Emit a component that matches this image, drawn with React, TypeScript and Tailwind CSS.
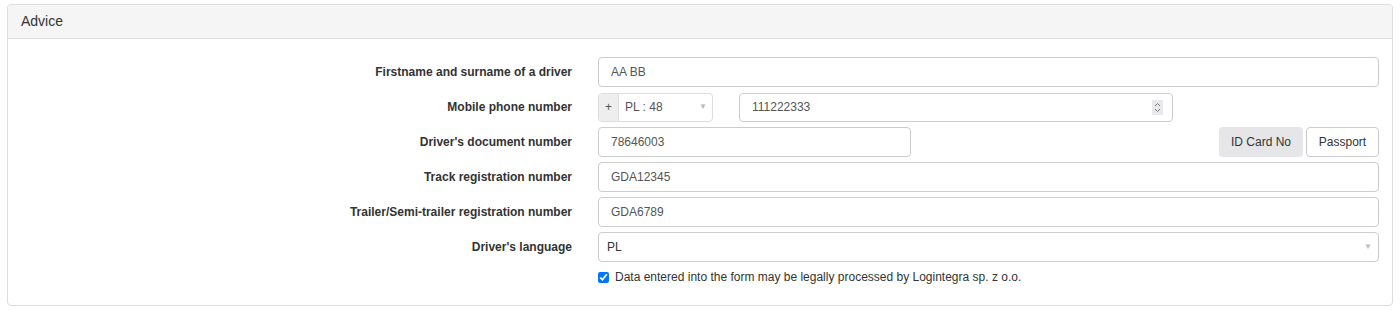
import React from "react";

const labelCls =
  "w-[564px] shrink-0 text-right text-[12px] font-bold text-[#333] pr-0";
const inputCls =
  "h-[30px] border border-[#ccc] rounded-[4px] bg-white px-[12px] flex items-center text-[12px] text-[#555]";

const Caret = () => (
  <span className="text-[8px] text-[#bbb] leading-none">▼</span>
);

const Row: React.FC<{ label: string; children: React.ReactNode }> = ({
  label,
  children,
}) => (
  <div className="flex items-center h-[30px] mb-[5px]">
    <div className={labelCls}>{label}</div>
    <div className="flex-1 ml-[26px] flex items-center">{children}</div>
  </div>
);

export default function App() {
  return (
    <div className="px-[7px] pt-[4px] font-['Liberation_Sans',Arial,sans-serif]">
      <div className="border border-[#ddd] rounded-[4px] bg-white h-[302px] overflow-hidden">
        <div className="bg-[#f5f5f5] border-b border-[#ddd] h-[34px] px-[13px] flex items-center text-[14px] text-[#333]">
          Advice
        </div>
        <div className="pt-[18px] pr-[13px]">
          <Row label="Firstname and surname of a driver">
            <div className={`${inputCls} flex-1`}>AA BB</div>
          </Row>
          <Row label="Mobile phone number">
            <div className="flex h-[29px] w-[115px] border border-[#ddd] rounded-[4px] overflow-hidden text-[12px] text-[#555]">
              <div className="w-[20px] bg-[#eee] border-r border-[#ddd] flex items-center justify-center">
                +
              </div>
              <div className="flex-1 flex items-center justify-between pl-[6px] pr-[5px]">
                <span>PL : 48</span>
                <Caret />
              </div>
            </div>
            <div className="ml-[26px] w-[434px] h-[29px] border border-[#ccc] rounded-[4px] flex items-center justify-between pl-[12px] pr-[9px] text-[12px] text-[#555]">
              <span>111222333</span>
              <div className="w-[11px] h-[15px] bg-[#e9e9ed] flex items-center justify-center">
                <svg width="7" height="11" viewBox="0 0 7 11" fill="none" stroke="#777" strokeWidth="1">
                  <path d="M1 4 L3.5 1.5 L6 4" />
                  <path d="M1 7 L3.5 9.5 L6 7" />
                </svg>
              </div>
            </div>
          </Row>
          <Row label="Driver's document number">
            <div className={`${inputCls} w-[313px]`}>78646003</div>
            <div className="flex-1" />
            <div className="h-[30px] w-[84px] rounded-[4px] bg-[#e6e6e9] flex items-center justify-center text-[12px] text-[#333]">
              ID Card No
            </div>
            <div className="ml-[3px] h-[30px] w-[73px] rounded-[4px] border border-[#ccc] bg-white flex items-center justify-center text-[12px] text-[#333]">
              Passport
            </div>
          </Row>
          <Row label="Track registration number">
            <div className={`${inputCls} flex-1`}>GDA12345</div>
          </Row>
          <Row label="Trailer/Semi-trailer registration number">
            <div className={`${inputCls} flex-1`}>GDA6789</div>
          </Row>
          <Row label="Driver's language">
            <div className="flex-1 h-[30px] border border-[#ccc] rounded-[4px] flex items-center justify-between pl-[8px] pr-[6px] text-[12px] text-[#333]">
              <span>PL</span>
              <Caret />
            </div>
          </Row>
          <div className="flex items-center ml-[590px] mt-[6px]">
            <input
              type="checkbox"
              defaultChecked
              className="w-[11px] h-[11px] m-0 accent-[#0075ff]"
            />
            <span className="ml-[6px] text-[12px] text-[#333]">
              Data entered into the form may be legally processed by Logintegra sp. z o.o.
            </span>
          </div>
        </div>
      </div>
    </div>
  );
}
